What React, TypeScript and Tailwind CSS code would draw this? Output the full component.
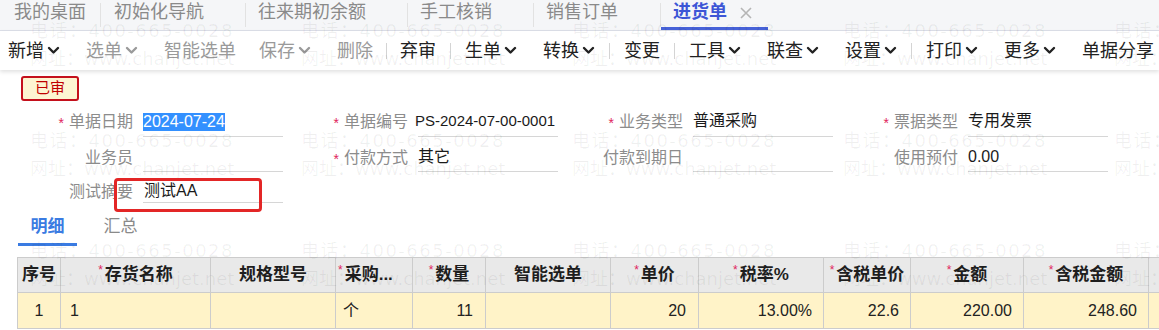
import React from "react";

const Chevron = () => (
  <svg width="13" height="9" viewBox="0 0 13 9" className="ml-[3px] shrink-0">
    <path d="M2 2 L6.5 6.5 L11 2" fill="none" stroke="currentColor" strokeWidth="2.4" strokeLinecap="round" strokeLinejoin="round" />
  </svg>
);

const Star = () => (
  <span className="text-[#e0245e] text-[14px] leading-none relative -top-[2px] mr-[5px]">*</span>
);

const HStar = () => (
  <span className="text-[#e0245e] text-[12px] font-normal leading-none relative -top-[5px] mr-[2px]">*</span>
);

type TItem = { label: string; chev?: boolean; dis?: boolean; sep?: "a" | "b"; pr?: string };
const tools: TItem[] = [
  { label: "新增", chev: true },
  { label: "选单", chev: true, dis: true },
  { label: "智能选单", dis: true, pr: "pr-[10px]" },
  { label: "保存", chev: true, dis: true },
  { label: "删除", dis: true, sep: "a" },
  { label: "弃审", sep: "b" },
  { label: "生单", chev: true },
  { label: "转换", chev: true, sep: "b" },
  { label: "变更", sep: "b" },
  { label: "工具", chev: true },
  { label: "联查", chev: true },
  { label: "设置", chev: true, sep: "b" },
  { label: "打印", chev: true },
  { label: "更多", chev: true },
  { label: "单据分享" },
];

function Field({
  label,
  req,
  children,
  pb,
}: {
  label: string;
  req?: boolean;
  children?: React.ReactNode;
  pb: string;
}) {
  return (
    <div className="flex items-stretch w-[275px] shrink-0">
      <div className={`w-[125px] shrink-0 flex items-end justify-end leading-[20px] text-[16px] text-[#8c8c8c] whitespace-nowrap ${pb}`}>
        {req && <Star />}
        <span>{label}</span>
      </div>
      <div className={`ml-[10px] w-[140px] shrink-0 border-b border-[#d6d6d6] flex items-end leading-[20px] text-[16px] text-[#1a1a1a] whitespace-nowrap ${pb}`}>
        {children}
      </div>
    </div>
  );
}

const headers: { t: string; req?: boolean; left?: boolean }[] = [
  { t: "序号" },
  { t: "存货名称", req: true },
  { t: "规格型号" },
  { t: "采购...", req: true, left: true },
  { t: "数量", req: true },
  { t: "智能选单" },
  { t: "单价", req: true },
  { t: "税率%", req: true },
  { t: "含税单价", req: true },
  { t: "金额", req: true },
  { t: "含税金额", req: true },
  { t: "" },
];

const body: { t: string; cls: string }[] = [
  { t: "1", cls: "justify-center" },
  { t: "1", cls: "justify-start pl-[9px]" },
  { t: "", cls: "" },
  { t: "个", cls: "justify-start pl-[7px]" },
  { t: "11", cls: "justify-end pr-[12px]" },
  { t: "", cls: "" },
  { t: "20", cls: "justify-end pr-[12px]" },
  { t: "13.00%", cls: "justify-end pr-[11px]" },
  { t: "22.6", cls: "justify-end pr-[11px]" },
  { t: "220.00", cls: "justify-end pr-[11px]" },
  { t: "248.60", cls: "justify-end pr-[11px]" },
  { t: "", cls: "" },
];

export default function App() {
  const wm = Array.from({ length: 15 });
  return (
    <div className="relative w-[1159px] h-[330px] overflow-hidden bg-white font-['Liberation_Sans','Noto_Sans_CJK_SC',sans-serif]">
      {/* top tabs */}
      <div className="h-[31px] bg-[#f5f6f8] border-b border-[#dcdfe8] flex items-stretch text-[18px] text-[#8a8a8a] whitespace-nowrap">
        <div className="w-[100px] shrink-0 pl-[14px] pt-[2px] leading-[20px]">我的桌面</div>
        <div className="w-px shrink-0 bg-[#e2e2e2] my-[3px]" />
        <div className="w-[144px] shrink-0 pl-[13px] pt-[2px] leading-[20px]">初始化导航</div>
        <div className="w-px shrink-0 bg-[#e2e2e2] my-[3px]" />
        <div className="w-[161px] shrink-0 pl-[12px] pt-[2px] leading-[20px]">往来期初余额</div>
        <div className="w-px shrink-0 bg-[#e2e2e2] my-[3px]" />
        <div className="w-[125px] shrink-0 pl-[12px] pt-[2px] leading-[20px]">手工核销</div>
        <div className="w-px shrink-0 bg-[#e2e2e2] my-[3px]" />
        <div className="w-[126px] shrink-0 pl-[12px] pt-[2px] leading-[20px]">销售订单</div>
        <div className="w-px shrink-0 bg-[#e2e2e2] my-[3px]" />
        <div className="w-[107px] shrink-0 pl-[12px] pt-[2px] leading-[20px] border-b-[3px] border-[#4762d8] flex items-start text-[#3d56d6] font-bold">
          <span>进货单</span>
          <svg width="12" height="12" viewBox="0 0 12 12" className="ml-[13px] mt-[5px]">
            <path d="M1 1 L11 11 M11 1 L1 11" stroke="#b5b5b5" strokeWidth="1.6" />
          </svg>
        </div>
      </div>

      {/* toolbar */}
      <div className="relative z-10 h-[39px] bg-white flex items-center text-[18px] whitespace-nowrap shadow-[0_2px_4px_rgba(0,0,0,0.12)]">
        {tools.map((it, i) => (
          <React.Fragment key={i}>
            <div
              className={`shrink-0 flex items-center leading-[22px] ${i === 0 ? "pl-[8px]" : "pl-[13px]"} ${it.pr ?? "pr-[13px]"} ${
                it.dis ? "text-[#9a9a9a]" : "text-[#222]"
              }`}
            >
              <span>{it.label}</span>
              {it.chev && <Chevron />}
            </div>
            {it.sep === "a" && <div className="shrink-0 w-px h-[16px] bg-[#d4d4d4]" />}
            {it.sep === "b" && <div className="shrink-0 w-px h-[16px] mx-[1px] bg-[#d4d4d4]" />}
          </React.Fragment>
        ))}
      </div>

      {/* status badge */}
      <div className="mt-[6px] ml-[21px] w-[58px] h-[25px] border-2 border-[#c4101c] rounded-[3px] bg-[#fdf5d2] flex items-center justify-center text-[15px] text-[#c00000]">
        已审
      </div>

      {/* form */}
      <div className="flex pl-[8px] h-[36px]">
        <Field label="单据日期" req pb="pb-[5px]">
          <span className="bg-[#3390ff] text-white leading-[18px]">2024-07-24</span>
        </Field>
        <Field label="单据编号" req pb="pb-[5px]">
          <span className="text-[15px] -ml-[3px]">PS-2024-07-00-0001</span>
        </Field>
        <Field label="业务类型" req pb="pb-[5px]">
          普通采购
        </Field>
        <Field label="票据类型" req pb="pb-[5px]">
          专用发票
        </Field>
      </div>
      <div className="flex pl-[8px] h-[35px]">
        <Field label="业务员" pb="pb-[4px]" />
        <Field label="付款方式" req pb="pb-[4px]">
          其它
        </Field>
        <Field label="付款到期日" pb="pb-[4px]" />
        <Field label="使用预付" pb="pb-[4px]">
          0.00
        </Field>
      </div>
      <div className="flex pl-[8px] h-[31px]">
        <Field label="测试摘要" pb="pb-[1px]">
          <span className="pl-[1px]">测试AA</span>
        </Field>
      </div>

      {/* detail tabs */}
      <div className="mt-[8px] h-[35px] flex items-stretch text-[17px]">
        <div className="ml-[18px] w-[59px] border-b-[3px] border-[#3a7be2] flex items-center justify-center font-bold text-[#3a7be2]">
          明细
        </div>
        <div className="ml-[14px] w-[59px] flex items-center justify-center text-[#8a8a8a] pb-[3px]">汇总</div>
      </div>

      {/* table */}
      <div className="mt-[11px] ml-[17px] border-t border-[#cccccc] grid grid-cols-[44px_150px_125px_77px_73px_125px_88px_125px_87px_113px_125px_80px] w-[1212px]">
        {headers.map((h, i) => (
          <div
            key={"h" + i}
            className={`h-[35px] bg-[#e9e9e9] border-r border-b border-[#cccccc] ${i === 0 ? "border-l" : ""} flex items-center ${
              h.left ? "justify-start pl-[2px]" : "justify-center"
            } text-[17px] font-bold text-[#1e1e1e] whitespace-nowrap overflow-hidden`}
          >
            {h.req && <HStar />}
            {h.t}
          </div>
        ))}
        {body.map((c, i) => (
          <div
            key={"b" + i}
            className={`h-[36px] bg-[#fff3c8] border-r border-b border-[#cccccc] ${i === 0 ? "border-l" : ""} flex items-center ${c.cls} text-[16px] text-[#222]`}
          >
            {c.t}
          </div>
        ))}
      </div>

      {/* annotation box */}
      <div className="absolute z-30 left-[114px] top-[178px] w-[148px] h-[34px] border-[3px] border-[#e32626] rounded-[4px] pointer-events-none" />

      {/* watermark */}
      <div className="absolute z-20 left-[30px] top-[17px] grid grid-cols-[repeat(5,271px)] auto-rows-[110px] pointer-events-none font-['DejaVu_Sans','Noto_Sans_CJK_SC',sans-serif] text-[18px] leading-[28px] text-black/[0.06] whitespace-nowrap">
        {wm.map((_, i) => (
          <div key={i}>
            <div className="tracking-[1.5px]">电话：400-665-0028</div>
            <div>网址：www.chanjet.net</div>
          </div>
        ))}
      </div>
    </div>
  );
}
